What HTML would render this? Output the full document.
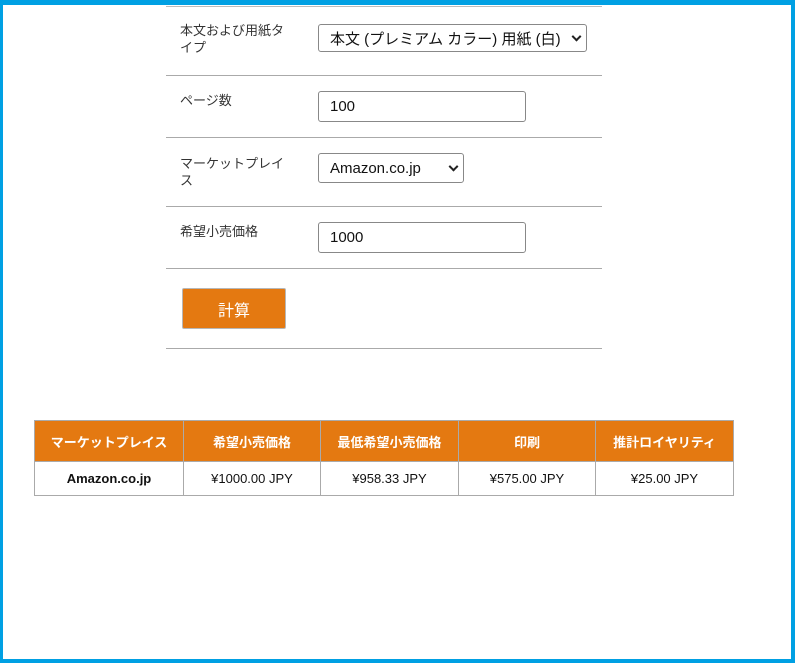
<!DOCTYPE html>
<html><head><meta charset="utf-8"><style>
*{box-sizing:border-box;margin:0;padding:0}
html,body{width:795px;height:663px;background:#fff;overflow:hidden;font-family:"Liberation Sans","Noto Sans CJK JP",sans-serif}
.frame{position:absolute;left:0;top:0;width:795px;height:663px;border-top:5px solid #00a0e3;border-left:3px solid #00a0e3;border-right:4px solid #00a0e3;border-bottom:4px solid #00a0e3}
.hl{position:absolute;left:166px;width:436px;height:1px;background:#aaa}
.lbl{position:absolute;left:180px;font-size:13px;color:#333;line-height:17px;width:115px}
.ctl{position:absolute;left:318px;border:1px solid #888;border-radius:3px;background:#fff;font-size:15px;color:#111;padding-left:11px;display:flex;align-items:center}
.chev{position:absolute;right:6px;top:50%;width:7px;height:7px;border-right:2px solid #222;border-bottom:2px solid #222;transform:translateY(-70%) rotate(45deg)}
.btn{position:absolute;left:182px;top:288px;width:104px;height:41px;background:#e47911;border:1px solid #b7b7b7;border-radius:2px;color:#fff;font-size:16px;display:flex;align-items:center;justify-content:center}
table{position:absolute;left:34px;top:420px;border-collapse:collapse;width:700px}
td,th{border:1px solid #aaa;text-align:center;font-size:13px;color:#111}
th{background:#e47911;color:#fff;height:41px;font-weight:bold}
td{height:34px}
</style></head><body>
<div class="frame"></div>
<div class="hl" style="top:6px;background:#bbb"></div>
<div class="lbl" style="top:22px">本文および用紙タイプ</div>
<div class="ctl" style="top:24px;width:269px;height:28px">本文 (プレミアム カラー) 用紙 (白)<span class="chev"></span></div>
<div class="hl" style="top:75px"></div>
<div class="lbl" style="top:92px">ページ数</div>
<div class="ctl" style="top:91px;width:208px;height:31px">100</div>
<div class="hl" style="top:137px"></div>
<div class="lbl" style="top:155px">マーケットプレイス</div>
<div class="ctl" style="top:153px;width:146px;height:30px">Amazon.co.jp<span class="chev"></span></div>
<div class="hl" style="top:206px"></div>
<div class="lbl" style="top:223px">希望小売価格</div>
<div class="ctl" style="top:222px;width:208px;height:31px">1000</div>
<div class="hl" style="top:268px"></div>
<div class="btn">計算</div>
<div class="hl" style="top:348px"></div>
<table>
<tr><th style="width:149px">マーケットプレイス</th><th style="width:137px">希望小売価格</th><th style="width:138px">最低希望小売価格</th><th style="width:137px">印刷</th><th>推計ロイヤリティ</th></tr>
<tr><td style="font-weight:bold">Amazon.co.jp</td><td>¥1000.00 JPY</td><td>¥958.33 JPY</td><td>¥575.00 JPY</td><td>¥25.00 JPY</td></tr>
</table>
</body></html>
